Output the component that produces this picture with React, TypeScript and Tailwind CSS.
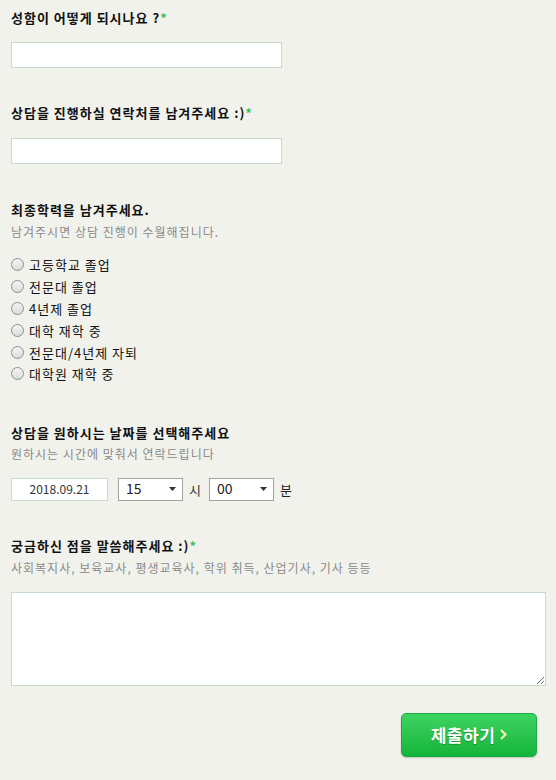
import React from "react";

const font = { fontFamily: '"Noto Sans CJK KR", "Noto Sans", sans-serif' };

function Heading({ text, req }: { text: string; req?: boolean }) {
  return (
    <div className="text-[13px] leading-[20px] font-bold tracking-[1px] text-[#111]">
      {text}
      {req && <span className="text-[#3fbf5b]">*</span>}
    </div>
  );
}

function Sub({ text }: { text: string }) {
  return <div className="text-[12px] leading-[20px] tracking-[1px] text-[#8a8a8a]">{text}</div>;
}

function Select({ value }: { value: string }) {
  return (
    <div className="flex h-[23px] w-[65px] items-center justify-between border border-[#a3a3a3] bg-white pl-[7px] pr-[6px]">
      <span className="-mt-[2px] text-[14px] leading-none text-[#222]">{value}</span>
      <svg width="7" height="4" viewBox="0 0 7 4">
        <path d="M0 0 L7 0 L3.5 4 Z" fill="#333" />
      </svg>
    </div>
  );
}

export default function App() {
  const radios = [
    "고등학교 졸업",
    "전문대 졸업",
    "4년제 졸업",
    "대학 재학 중",
    "전문대/4년제 자퇴",
    "대학원 재학 중",
  ];
  return (
    <div
      className="flex min-h-[780px] w-[556px] flex-col bg-[#f2f2ec] pl-[11px] pr-[10px] pt-[8px]"
      style={font}
    >
      <Heading text="성함이 어떻게 되시나요 ?" req />
      <div className="mt-[14px] h-[26px] w-[271px] border border-[#c8dacd] bg-white" />

      <div className="mt-[35px]">
        <Heading text="상담을 진행하실 연락처를 남겨주세요 :)" req />
      </div>
      <div className="mt-[15px] h-[26px] w-[271px] border border-[#c8dacd] bg-white" />

      <div className="mt-[36px]">
        <Heading text="최종학력을 남겨주세요." />
      </div>
      <div className="mt-[2px]">
        <Sub text="남겨주시면 상담 진행이 수월해집니다." />
      </div>
      <div className="mt-[12px] flex flex-col">
        {radios.map((r) => (
          <div key={r} className="flex h-[21.8px] items-center gap-[5px]">
            <span className="h-[13px] w-[13px] rounded-full border border-[#8e8e8e] bg-gradient-to-b from-[#f4f4f4] to-[#dcdcdc]" />
            <span className="text-[13px] leading-none tracking-[1px] text-[#111]">{r}</span>
          </div>
        ))}
      </div>

      <div className="mt-[38px]">
        <Heading text="상담을 원하시는 날짜를 선택해주세요" />
      </div>
      <div className="mt-[1px]">
        <Sub text="원하시는 시간에 맞춰서 연락드립니다" />
      </div>
      <div className="mt-[14px] flex h-[23px] items-center">
        <div className="flex h-[23px] w-[97px] items-center justify-center border border-[#c8dacd] bg-white text-[12px] text-[#333]">
          2018.09.21
        </div>
        <div className="ml-[10px]">
          <Select value="15" />
        </div>
        <span className="ml-[6px] text-[13px] text-[#333]">시</span>
        <div className="ml-[8px]">
          <Select value="00" />
        </div>
        <span className="ml-[6px] text-[13px] text-[#222]">분</span>
      </div>

      <div className="mt-[35px]">
        <Heading text="궁금하신 점을 말씀해주세요 :)" req />
      </div>
      <div className="mt-[2px]">
        <Sub text="사회복지사, 보육교사, 평생교육사, 학위 취득, 산업기사, 기사 등등" />
      </div>
      <textarea className="mt-[14px] h-[94px] w-[535px] border border-[#c8dacd] bg-white outline-none" />

      <div className="mt-[27px] flex justify-end pr-[9px]">
        <button className="flex h-[44px] w-[136px] items-center justify-center gap-[5px] rounded-[5px] border border-[#1ea846] bg-gradient-to-b from-[#3dd461] to-[#11b43a] shadow-[0_1px_2px_rgba(0,0,0,0.2)]">
          <span className="text-[17px] font-bold leading-none tracking-[0.5px] text-white [text-shadow:0_1px_1px_rgba(0,80,20,0.4)]">
            제출하기
          </span>
          <svg width="7" height="11" viewBox="0 0 7 11">
            <path d="M1 1 L5.5 5.5 L1 10" stroke="#fdfcb0" strokeWidth="2" fill="none" />
          </svg>
        </button>
      </div>
    </div>
  );
}
